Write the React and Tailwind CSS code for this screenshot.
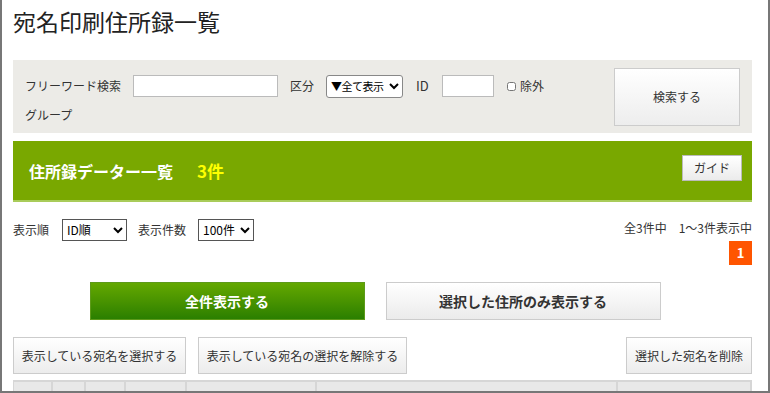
import React, { useState } from 'react';

const cols = [39, 33, 40, 61, 130, 301, 134];

export default function App() {
  const [keyword, setKeyword] = useState('');
  const [kubun, setKubun] = useState('all');
  const [id, setId] = useState('');
  const [exclude, setExclude] = useState(false);
  const [order, setOrder] = useState('id');
  const [perPage, setPerPage] = useState('100');

  return (
    <div className="w-[770px] h-[393px] overflow-hidden bg-white border-l-2 border-r-2 border-b-2 border-[#777] text-[#333] font-['Noto_Sans_CJK_JP','Noto_Sans',sans-serif]">
      <div className="pl-[11px] pr-[16px] w-full">
        <h1 className="text-[23px] leading-[28px] pt-[7px] text-[#222]">宛名印刷住所録一覧</h1>

        <div className="mt-[25px] bg-[#ecebe7] h-[73px] flex justify-between pl-[12px] pr-[12px]">
          <div className="pt-[15px] text-[12px]">
            <div className="flex items-center h-[22px]">
              <span className="w-[108px]">フリーワード検索</span>
              <input className="w-[145px] h-[22px] bg-white border border-[#bbb]" value={keyword} onChange={e=>setKeyword(e.target.value)} />
              <span className="ml-[12px] w-[36px]">区分</span>
              <select className="w-[77px] h-[23px] bg-white border border-[#888] rounded-[3px] text-[11px] tracking-[-0.5px] text-black px-0" value={kubun} onChange={e=>setKubun(e.target.value)}>
                <option value="all">▼全て表示</option>
              </select>
              <span className="ml-[13px] w-[26px] text-[13px]">ID</span>
              <input className="w-[52px] h-[22px] bg-white border border-[#bbb]" value={id} onChange={e=>setId(e.target.value)} />
              <label className="ml-[13px] flex items-center gap-[4px]">
                <input type="checkbox" className="w-[9px] h-[9px]" checked={exclude} onChange={e=>setExclude(e.target.checked)} />
                <span>除外</span>
              </label>
            </div>
            <div className="mt-[9px]">グループ</div>
          </div>
          <button type="button" className="mt-[8px] w-[126px] h-[58px] border border-[#ccc] bg-gradient-to-b from-white to-[#ededed] text-[12px] text-[#333]">検索する</button>
        </div>

        <div className="mt-[8px] h-[61px] bg-[#79a800] border-b-2 border-[#a9cc5a] flex items-center justify-between pl-[16px] pr-[10px]">
          <div className="text-[16px] font-bold text-white flex items-center">
            住所録データー一覧
            <span className="ml-[24px] text-[#ffff00] text-[17px]">3件</span>
          </div>
          <button type="button" className="-mt-[5px] w-[60px] h-[26px] border border-[#bbb] bg-gradient-to-b from-white to-[#ebebeb] text-[12px] text-[#333]">ガイド</button>
        </div>

        <div className="mt-[16px] flex justify-between text-[12px]">
          <div className="flex items-center h-[23px]">
            <span className="w-[49px]">表示順</span>
            <select className="w-[65px] h-[22px] bg-white border border-[#555] text-[12px] text-black" value={order} onChange={e=>setOrder(e.target.value)}>
              <option value="id">ID順</option>
            </select>
            <span className="ml-[11px] w-[60px]">表示件数</span>
            <select className="w-[56px] h-[22px] bg-white border border-[#555] text-[12px] text-black" value={perPage} onChange={e=>setPerPage(e.target.value)}>
              <option value="100">100件</option>
            </select>
          </div>
          <div className="flex flex-col items-end">
            <div className="h-[18px] leading-[18px] mt-[1px]">全3件中　1〜3件表示中</div>
            <div className="mt-[4px] w-[23px] h-[24px] bg-[#ff5500] text-white font-bold text-[13px] flex items-center justify-center">1</div>
          </div>
        </div>

        <div className="mt-[17px] flex justify-center gap-[21px] pr-[15px]">
          <button type="button" className="w-[275px] h-[38px] bg-gradient-to-b from-[#64a800] to-[#2a7f00] border border-[#5d9a1a] text-white font-bold text-[14px]">全件表示する</button>
          <button type="button" className="w-[275px] h-[38px] bg-gradient-to-b from-white to-[#ebebeb] border border-[#ccc] text-[#333] font-bold text-[14px]">選択した住所のみ表示する</button>
        </div>

        <div className="mt-[17px] flex justify-between text-[12px]">
          <div className="flex gap-[12px]">
            <button type="button" className="h-[37px] px-0 whitespace-nowrap w-[173px] bg-gradient-to-b from-white to-[#ececec] border border-[#ccc] text-[#333]">表示している宛名を選択する</button>
            <button type="button" className="h-[37px] px-0 whitespace-nowrap w-[209px] bg-gradient-to-b from-white to-[#ececec] border border-[#ccc] text-[#333]">表示している宛名の選択を解除する</button>
          </div>
          <button type="button" className="h-[37px] px-0 whitespace-nowrap w-[126px] bg-gradient-to-b from-white to-[#ececec] border border-[#ccc] text-[#333]">選択した宛名を削除</button>
        </div>

        <table className="mt-[6px] border-collapse">
          <thead>
            <tr className="bg-[#e8e8e8]">
              {cols.map((w, i) => (
                <th key={i} style={{ width: w }} className="h-[30px] border-t-2 border-l border-r-2 border-[#d6d6d6]"></th>
              ))}
            </tr>
          </thead>
        </table>
      </div>
    </div>
  );
}
